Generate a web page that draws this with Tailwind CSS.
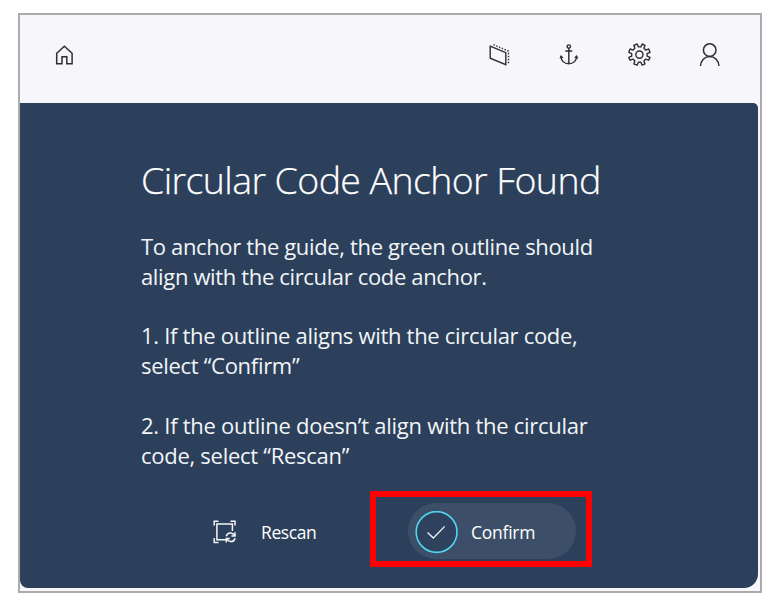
<!DOCTYPE html>
<html lang="en">
<head>
<meta charset="utf-8">
<title>Circular Code Anchor Found</title>
<script src="https://cdn.jsdelivr.net/npm/@tailwindcss/browser@4"></script>
</head>
<body class="bg-white w-[771px] h-[605px] overflow-hidden pl-[18px] pt-[13px] font-['Open_Sans','Noto_Sans',sans-serif]">
<div class="w-[744px] h-[580px] border-2 border-[#aeaaab] bg-[#f7f6fb] flex flex-col">
  <header class="h-[88px] shrink-0 flex items-start justify-between pl-[32px] pr-[39px] pt-[28px] text-[#2e2e2e]">
    <svg class="w-6 h-6" viewBox="52 43 24 24" fill="none" stroke="currentColor" stroke-width="1.5"><path d="M56.7 63.8V53.3L64.4 46.3L72.1 53.3V63.8H66.8V56.7H62V63.8Z"/></svg>
    <nav class="flex gap-[46px]">
      <svg class="w-6 h-6" viewBox="487 43 24 24" fill="none" stroke="currentColor" stroke-width="1.4"><path d="M490.2 46.2L505.8 52.6V64.6L490.2 58.2Z"/><path stroke-dasharray="1.4 1.6" d="M493.5 44.6L508.5 51.2V64"/></svg>
      <svg class="w-6 h-6" viewBox="557 43 24 24" fill="none" stroke="currentColor" stroke-width="1.45"><circle cx="568.8" cy="46.6" r="1.7"/><path d="M568.8 48.4V63.8M565.3 51H572.3M561 56.5C561.2 61 564.5 63.8 568.8 63.8S576.4 61 576.6 56.5"/><path stroke-width="1.1" d="M560 58.4L561 56L563 57.8M574.6 57.8L576.6 56L577.7 58.4"/></svg>
      <svg class="w-6 h-6" viewBox="627 43 24 24" fill="none" stroke="currentColor" stroke-width="1.4" stroke-linejoin="round"><circle cx="639.4" cy="54.6" r="3.6"/><path d="M638.4 46.9L637.1 44L633.8 45.3L634.9 48.3L633.1 50.1L630.1 49L628.8 52.3L631.7 53.6V56.1L628.8 57.4L630.1 60.2L633.1 59.1L634.9 60.9L633.8 63.9L637.1 65.2L638.4 62.3H640.9L642.2 65.2L645 63.9L643.9 60.9L645.7 59.1L648.7 60.2L650 57.4L647.1 56.1V53.6L650 52.3L648.7 49L645.7 50.1L643.9 48.3L645 45.3L642.2 44L640.9 46.9Z"/></svg>
      <svg class="w-6 h-6" viewBox="697 43 24 24" fill="none" stroke="currentColor" stroke-width="1.5"><circle cx="709.7" cy="50.1" r="6.3"/><path d="M700.5 66C700.8 60.3 704.6 56.6 709.7 56.6S718.7 60.3 719 66"/></svg>
    </nav>
  </header>
  <main class="w-[738px] h-[485px] bg-[#2c405b] rounded-tr-[5px] rounded-br-[14px] rounded-bl-[8px] text-white pl-[121px] flex flex-col">
    <h1 class="mt-[51px] h-[52px] text-[37.5px] leading-[52px] font-light tracking-[-0.6px] whitespace-nowrap [-webkit-text-stroke:0.25px_white]">Circular Code Anchor Found</h1>
    <div class="mt-[26px] text-[22px] leading-[29.8px] tracking-[-0.27px] whitespace-nowrap text-[#f2f5f8]">
      <p class="tracking-[-0.35px]">To anchor the guide, the green outline should<br>align with the circular code anchor.</p>
      <p class="mt-[29.8px] tracking-[-0.3px]">1. If the outline aligns with the circular code,<br>select “Confirm”</p>
      <p class="mt-[29.8px]">2. If the outline doesn’t align with the circular<br>code, select “Rescan”</p>
    </div>
    <div class="mt-[21px] ml-[72px] flex items-center">
      <button class="flex items-center w-[157px] pt-[6px] text-left text-[17.5px] tracking-[-0.4px]">
        <svg class="w-6 h-6 mr-[24px]" viewBox="213 520 24 24" fill="none" stroke="#f2f5f8" stroke-width="1.5"><path d="M214.2 525.5V521.2H218.5M230.5 521.2H235V525.5M214.2 538V542.4H218.5M226 539.8H216.9V524H232.4V531"/><path d="M226.2 536.3C227 533.8 229 532.8 231 533.1C232.8 533.4 234 534.6 234.6 536M235 532.2V536H231.4M235.1 538.2C234.3 540.7 232.3 541.8 230.3 541.5C228.5 541.2 227.3 540 226.6 538.6M226.3 542.4V538.6H229.8"/></svg>
        <span>Rescan</span>
      </button>
      <div class="w-[222px] h-[76px] border-6 border-[#fe0000] pl-[32px] pt-[6px]">
        <button class="w-[168px] h-[56px] rounded-full bg-[#3d4f68] flex items-center pl-[7px] pt-[2px] text-[17.5px] tracking-[-0.25px]">
          <svg class="w-[43px] h-[43px] mr-[13px]" viewBox="415 511 43 43" fill="none"><circle cx="436.6" cy="532" r="20.4" fill="#2e425e" stroke="#50d5ee" stroke-width="1.6"/><path stroke="#f2f5f8" stroke-width="1.3" d="M427.5 532.5L433.3 538L444.7 526.4"/></svg>
          <span>Confirm</span>
        </button>
      </div>
    </div>
  </main>
</div>
</body>
</html>
